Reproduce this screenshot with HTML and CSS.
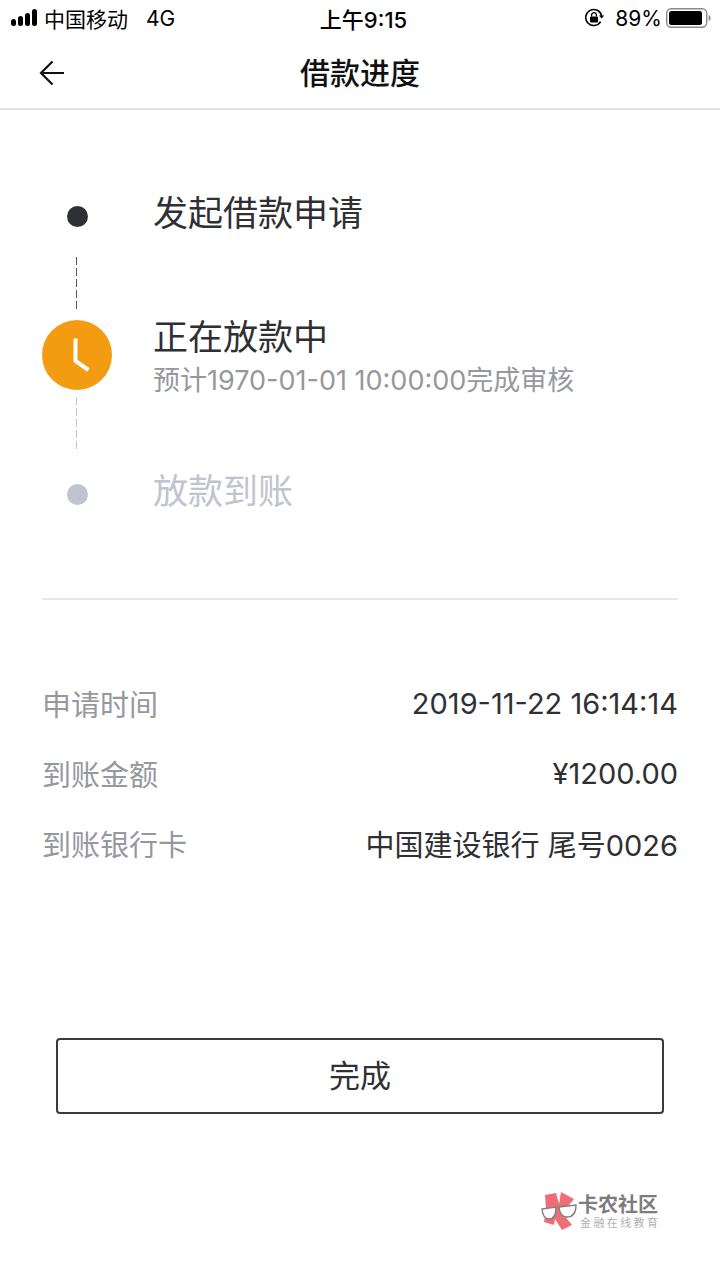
FILE: index.html
```html
<!DOCTYPE html>
<html lang="zh">

<head>
    <meta charset="UTF-8">
    <title>借款进度</title>
    <link rel="stylesheet" href="styles.css">
</head>

<body>
    <div class="status_bar">
        <div class="status_left">
            <svg class="signal" width="28" height="18" viewBox="0 0 28 18">
                <rect x="0" y="10" width="5" height="7" rx="2.5" fill="#000" />
                <rect x="7" y="7" width="5" height="10" rx="2.5" fill="#000" />
                <rect x="14" y="4" width="5" height="13" rx="2.5" fill="#000" />
                <rect x="21" y="0" width="5" height="17" rx="2.5" fill="#000" />
            </svg>
            <span class="carrier">中国移动</span>
            <span class="net">4G</span>
        </div>
        <div class="status_time">上午9:15</div>
        <div class="status_right">
            <svg class="lock" width="20" height="20" viewBox="0 0 20 20">
                <path d="M16.6 13.6A8 8 0 1 1 17.6 8" fill="none" stroke="#000" stroke-width="1.6" />
                <path d="M15 7.4h5.2l-2.6 3.2z" fill="#000" />
                <rect x="6" y="8.6" width="8" height="6" rx="1" fill="#000" />
                <path d="M7.6 8.6V7a2.4 2.4 0 0 1 4.8 0v1.6" fill="none" stroke="#000" stroke-width="1.3" />
            </svg>
            <span class="percent">89%</span>
            <svg class="battery" width="45" height="20" viewBox="0 0 45 20">
                <rect x="0.7" y="0.7" width="40" height="18.6" rx="4.5" fill="#fff" stroke="#8a8a8a" stroke-width="1.4" />
                <rect x="3" y="3" width="33" height="14" rx="2.5" fill="#000" />
                <path d="M42.6 7c1.4.4 2 1.5 2 3s-.6 2.6-2 3z" fill="#8a8a8a" />
            </svg>
        </div>
    </div>

    <div class="nav_bar">
        <svg class="back" width="26" height="26" viewBox="0 0 26 26">
            <path d="M25 13H2M13.5 1.5 2 13l11.5 11.5" fill="none" stroke="#111" stroke-width="2.2" />
        </svg>
        <div class="nav_title">借款进度</div>
    </div>

    <div class="steps">
        <div class="step step_one">
            <div class="step_mark"><span class="dot dot_dark"></span></div>
            <div class="step_title">发起借款申请</div>
        </div>
        <div class="line line_dark"></div>
        <div class="step step_two">
            <div class="step_mark">
                <svg class="clock" width="70" height="70" viewBox="0 0 70 70">
                    <circle cx="35" cy="35" r="35" fill="#f39c12" />
                    <path d="M33.5 18.5v22.5l13 9" fill="none" stroke="#fff" stroke-width="4" />
                </svg>
            </div>
            <div class="step_text">
                <div class="step_title">正在放款中</div>
                <div class="step_sub">预计1970-01-01 10:00:00完成审核</div>
            </div>
        </div>
        <div class="line line_light"></div>
        <div class="step step_three">
            <div class="step_mark"><span class="dot dot_grey"></span></div>
            <div class="step_title title_grey">放款到账</div>
        </div>
    </div>

    <div class="info">
        <div class="info_row">
            <span class="info_label">申请时间</span>
            <span class="info_value">2019-11-22 16:14:14</span>
        </div>
        <div class="info_row">
            <span class="info_label">到账金额</span>
            <span class="info_value">¥1200.00</span>
        </div>
        <div class="info_row">
            <span class="info_label">到账银行卡</span>
            <span class="info_value">中国建设银行 尾号0026</span>
        </div>
    </div>

    <div class="btn_wrap">
        <div class="btn_done">完成</div>
    </div>

    <div class="water">
        <svg class="water_logo" width="37" height="40" viewBox="0 0 37 40">
            <path d="M4 3 15 1l3 11L20 0l13 7-9 11-2 4 9 11-10 5-7-11-1 6-10-3 2-13z" fill="#ee6e78" />
            <path d="M1 17 15 15Q15 27 8 27 2 27 1 17zM18 15 35 13Q35 25 26 25 19 25 18 15z" fill="#fff" stroke="#808080" stroke-width="1.4" />
        </svg>
        <div class="water_text">
            <div class="water_name">卡农社区</div>
            <div class="water_sub">金融在线教育</div>
        </div>
    </div>
</body>

</html>
```

FILE: styles.css
```css
body {
    margin: 0;
    padding: 0;
    width: 720px;
    height: 1280px;
    overflow: hidden;
    background-color: #fff;
    color: #2f3033;
    font-family: Inter, "Noto Sans CJK SC", sans-serif;
}

.status_bar {
    height: 36px;
    margin-bottom: 2px;
    display: flex;
    align-items: center;
    justify-content: space-between;
    color: #000;
    font-size: 21px;
}

.status_left {
    width: 257px;
    display: flex;
    align-items: center;
    padding-left: 11px;
    box-sizing: border-box;
}

.signal {
    margin-right: 5px;
}

.net {
    margin-left: 18px;
}

.status_time {
    font-size: 22px;
    font-weight: 500;
}

.status_right {
    width: 250px;
    display: flex;
    align-items: center;
    justify-content: flex-end;
    padding-right: 9px;
    box-sizing: border-box;
}

.lock {
    margin-right: 11px;
}

.percent {
    margin-right: 4px;
}

.nav_bar {
    height: 72px;
    position: relative;
    display: flex;
    align-items: center;
    justify-content: center;
    padding-bottom: 5px;
    border-bottom: 2px solid #e3e3e3;
    box-sizing: border-box;
}

.back {
    position: absolute;
    left: 39px;
    top: 22px;
}

.nav_title {
    font-size: 30px;
    font-weight: 500;
    color: #111;
}

.steps {
    margin: 0 42px;
    padding-top: 73px;
    height: 490px;
    box-sizing: border-box;
    border-bottom: 2px solid #e8e8e8;
}

.step {
    display: flex;
    align-items: center;
}

.step_mark {
    width: 70px;
    display: flex;
    justify-content: center;
    margin-right: 41px;
}

.dot {
    width: 21px;
    height: 21px;
    border-radius: 50%;
}

.step_one .dot {
    margin-top: 6px;
}

.dot_dark {
    background-color: #2f3033;
}

.dot_grey {
    background-color: #c0c4cf;
}

.step_title {
    font-size: 35px;
    line-height: 60px;
    color: #2f3033;
}

.title_grey {
    color: #c0c4cf;
}

.step_sub {
    margin-top: 7px;
    font-size: 27px;
    line-height: 30px;
    color: #96989e;
}

.line {
    width: 1px;
    margin-left: 34px;
}

.line_dark {
    height: 55px;
    margin-top: 14px;
    background-image: repeating-linear-gradient(to bottom, #55575c 0, #55575c 8px, transparent 8px, transparent 11px);
}

.line_light {
    height: 54px;
    margin-top: 7px;
    background-image: repeating-linear-gradient(to bottom, #c4c6cb 0, #c4c6cb 8px, transparent 8px, transparent 11px);
}

.step_two {
    margin-top: 8px;
    align-items: flex-start;
}

.step_two .step_title {
    line-height: 44px;
}

.step_text {
    height: 75px;
    margin-top: -5px;
}

.step_three {
    margin-top: 10px;
}

.step_three .dot {
    margin-top: 6px;
}

.info {
    padding: 68px 42px 0;
}

.info_row {
    display: flex;
    justify-content: space-between;
    align-items: center;
    height: 70px;
    font-size: 29px;
}

.info_label {
    color: #96989e;
}

.info_value {
    color: #2f3033;
}

.btn_wrap {
    padding: 160px 56px 0;
}

.btn_done {
    height: 76px;
    padding-bottom: 6px;
    border: 2px solid #3a3a3c;
    border-radius: 4px;
    box-sizing: border-box;
    display: flex;
    align-items: center;
    justify-content: center;
    font-size: 31px;
    color: #2f3033;
}

.water {
    position: absolute;
    left: 541px;
    top: 1192px;
    display: flex;
    align-items: flex-start;
}

.water_text {
    padding-top: 2px;
}

.water_name {
    font-family: "Liberation Sans", "Noto Sans CJK SC", sans-serif;
    font-size: 20px;
    line-height: 23px;
    font-weight: 700;
    color: #7d7d7d;
}

.water_sub {
    font-family: "Liberation Sans", "Noto Sans CJK SC", sans-serif;
    margin-left: 2px;
    font-size: 11px;
    line-height: 13px;
    color: #b0b0b0;
    letter-spacing: 2.4px;
}
```
